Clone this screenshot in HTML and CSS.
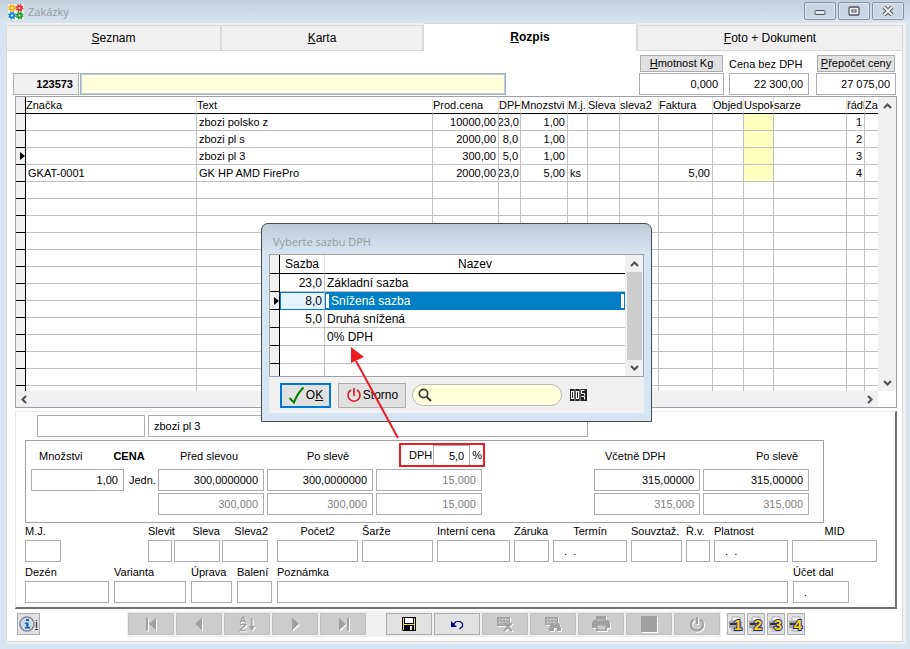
FILE: index.html
```html
<!DOCTYPE html>
<html lang="cs">
<head>
  <meta charset="UTF-8" />
  <meta name="viewport" content="width=device-width, initial-scale=1.0"/>
  <title>Zakázky</title>
  <link rel="stylesheet" href="styles.css">
</head>
<body>

  <header class="titlebar">
    <svg class="app-icon" viewBox="0 0 16 16" width="16" height="16">
      <rect width="16" height="16" fill="#fbf6dc"/>
      <g fill="none" stroke-width="2">
        <circle cx="4" cy="4" r="2" stroke="#f0b323"/>
        <circle cx="11.500" cy="4" r="2" stroke="#e8343c"/>
        <circle cx="4" cy="11.500" r="2" stroke="#1687d9"/>
        <circle cx="11.500" cy="11.500" r="2" stroke="#1f9d3a"/>
      </g>
      <g fill="none" stroke-width="1.500" stroke-dasharray="1.300 1.320">
        <circle cx="4" cy="4" r="3.300" stroke="#f0b323"/>
        <circle cx="11.500" cy="4" r="3.300" stroke="#e8343c"/>
        <circle cx="4" cy="11.500" r="3.300" stroke="#1687d9"/>
        <circle cx="11.500" cy="11.500" r="3.300" stroke="#1f9d3a"/>
      </g>
    </svg>
    <h1>Zakázky</h1>
    <div class="win-buttons">
      <button type="button" aria-label="Minimalizovat">
        <svg width="12" height="10" viewBox="0 0 12 10"><rect x="1" y="4.500" width="10" height="4" rx="1" fill="#e4e4e4" stroke="#50545c"/></svg>
      </button>
      <button type="button" aria-label="Maximalizovat">
        <svg width="12" height="10" viewBox="0 0 12 10"><rect x="1" y="1" width="10" height="8" rx="1" fill="#eee" stroke="#50545c" stroke-width="1.300"/><rect x="4" y="4" width="4" height="2" fill="#fff" stroke="#50545c"/></svg>
      </button>
      <button type="button" aria-label="Zavřít">
        <svg width="12" height="10" viewBox="0 0 12 10"><path d="M2 1 10 9M10 1 2 9" stroke="#50545c" stroke-width="4"/><path d="M2 1 10 9M10 1 2 9" stroke="#fff" stroke-width="1.800"/></svg>
      </button>
    </div>
  </header>

  <main class="window">
    <nav class="tabs">
      <button type="button"><span><u>S</u>eznam</span></button>
      <button type="button"><span><u>K</u>arta</span></button>
      <button type="button" class="active"><span><u>R</u>ozpis</span></button>
      <button type="button"><span><u>F</u>oto + Dokument</span></button>
    </nav>

    <div class="page">
      <!-- Order number and totals -->
      <div class="order-head">
        <input class="order-no" type="text" value="123573" aria-label="Číslo zakázky" readonly>
        <input class="order-name" type="text" aria-label="Název zakázky">
        <div class="totals">
          <div class="total">
            <button type="button" class="small-btn"><u>H</u>motnost Kg</button>
            <input class="num" type="text" value="0,000" aria-label="Hmotnost Kg">
          </div>
          <div class="total total-mid">
            <label for="cenaBez">Cena bez DPH</label>
            <input class="num" type="text" id="cenaBez" value="22 300,00">
          </div>
          <div class="total">
            <button type="button" class="small-btn"><u>P</u>řepočet ceny</button>
            <input class="num" type="text" value="27 075,00" aria-label="Cena s DPH">
          </div>
        </div>
      </div>

      <!-- Items grid -->
      <section class="grid-box">
        <div class="grid-view">
          <table class="grid items">
            <colgroup>
              <col class="w-sel"><col class="w-znacka"><col><col class="w-cena"><col class="w-dph"><col class="w-mnoz"><col class="w-mj"><col class="w-sleva"><col class="w-sleva2"><col class="w-fakt"><col class="w-obj"><col class="w-uspok"><col class="w-sarze"><col class="w-rad"><col class="w-za">
            </colgroup>
            <thead>
              <tr><th></th><th>Značka</th><th>Text</th><th>Prod.cena</th><th>DPH</th><th>Mnozstvi</th><th>M.j.</th><th>Sleva</th><th>sleva2</th><th>Faktura</th><th>Objedn</th><th>Uspok</th><th>sarze</th><th>řádk</th><th>Za</th></tr>
            </thead>
            <tbody id="items">
              <tr><td></td><td></td><td>zbozi polsko z</td><td>10000,00</td><td>23,0</td><td>1,00</td><td></td><td></td><td></td><td></td><td></td><td class="mark"></td><td></td><td>1</td><td></td></tr>
              <tr><td></td><td></td><td>zbozi pl s</td><td>2000,00</td><td>8,0</td><td>1,00</td><td></td><td></td><td></td><td></td><td></td><td class="mark"></td><td></td><td>2</td><td></td></tr>
              <tr class="current"><td></td><td></td><td>zbozi pl 3</td><td>300,00</td><td>5,0</td><td>1,00</td><td></td><td></td><td></td><td></td><td></td><td class="mark"></td><td></td><td>3</td><td></td></tr>
              <tr><td></td><td>GKAT-0001</td><td>GK HP AMD FirePro</td><td>2000,00</td><td>23,0</td><td>5,00</td><td>ks</td><td></td><td></td><td>5,00</td><td></td><td class="mark"></td><td></td><td>4</td><td></td></tr>
            </tbody>
          </table>
          <div class="vscroll">
            <svg width="9" height="6" viewBox="0 0 9 6"><path d="M1 5 4.500 1.500 8 5"/></svg>
            <svg width="9" height="6" viewBox="0 0 9 6"><path d="M1 1 4.500 4.500 8 1"/></svg>
          </div>
        </div>
        <div class="hscroll">
          <svg width="6" height="9" viewBox="0 0 6 9"><path d="M5 1 1.500 4.500 5 8"/></svg>
          <svg width="6" height="9" viewBox="0 0 6 9"><path d="M1 1 4.500 4.500 1 8"/></svg>
        </div>
      </section>

      <!-- Detail of the current item -->
      <section class="detail">
        <div class="detail-name">
          <input class="w108" type="text" aria-label="Značka">
          <input class="w440" type="text" value="zbozi pl 3" aria-label="Text">
        </div>

        <div class="prices">
          <div class="price-head">
            <label for="mnozstvi">Množstvi</label>
            <strong>CENA</strong>
          </div>
          <label class="lab-pred" for="predSlevou">Před slevou</label>
          <label class="lab-po" for="poSleve">Po slevě</label>
          <div class="dph-box">
            <label for="dph">DPH</label>
            <input class="num" type="text" id="dph" value="5,0">
            <span>%</span>
          </div>
          <label class="lab-vcetne" for="vcetneDph">Včetně DPH</label>
          <label class="lab-po2" for="vcetnePo">Po slevě</label>

          <input class="num" type="text" id="mnozstvi" value="1,00">
          <span class="jedn">Jedn.</span>
          <input class="num" type="text" id="predSlevou" value="300,0000000">
          <input class="num" type="text" id="poSleve" value="300,0000000">
          <input class="num dim" type="text" value="15,000" aria-label="DPH za jednotku">
          <input class="num col7" type="text" id="vcetneDph" value="315,00000">
          <input class="num" type="text" id="vcetnePo" value="315,00000">

          <input class="num dim col3" type="text" value="300,000" aria-label="Celkem před slevou">
          <input class="num dim" type="text" value="300,000" aria-label="Celkem po slevě">
          <input class="num dim" type="text" value="15,000" aria-label="DPH celkem">
          <input class="num dim col7" type="text" value="315,000" aria-label="Celkem včetně DPH">
          <input class="num dim" type="text" value="315,000" aria-label="Celkem včetně DPH po slevě">
        </div>

        <div class="fields">
          <div class="field w36"><label for="mj">M.J.</label><input type="text" id="mj"></div>
          <div class="discounts">
            <div class="field w24"><label for="slevit">Slevit</label><input type="text" id="slevit"></div>
            <div class="field w46 right"><label for="sleva">Sleva</label><input type="text" id="sleva"></div>
            <div class="field w46 right"><label for="sleva2">Sleva2</label><input type="text" id="sleva2"></div>
          </div>
          <div class="field w81 center"><label for="pocet2">Počet2</label><input type="text" id="pocet2"></div>
          <div class="field w71"><label for="sarze">Šarže</label><input type="text" id="sarze"></div>
          <div class="field w73"><label for="interni">Interní cena</label><input type="text" id="interni"></div>
          <div class="field w35"><label for="zaruka">Záruka</label><input type="text" id="zaruka"></div>
          <div class="field w74 center date"><label for="termin">Termín</label><input type="text" id="termin" value=".  ."></div>
          <div class="field w51"><label for="souvztaz">Souvztaž.</label><input type="text" id="souvztaz"></div>
          <div class="field w24"><label for="rv">Ř.v.</label><input type="text" id="rv"></div>
          <div class="field w74 date"><label for="platnost">Platnost</label><input type="text" id="platnost" value=".  ."></div>
          <div class="field w85 center"><label for="mid">MID</label><input type="text" id="mid"></div>
        </div>
        <div class="fields wide-gap">
          <div class="field w84"><label for="dezen">Dezén</label><input type="text" id="dezen"></div>
          <div class="field w72"><label for="varianta">Varianta</label><input type="text" id="varianta"></div>
          <div class="field w41"><label for="uprava">Úprava</label><input type="text" id="uprava"></div>
          <div class="field w35"><label for="baleni">Balení</label><input type="text" id="baleni"></div>
          <div class="field w511"><label for="poznamka">Poznámka</label><input type="text" id="poznamka"></div>
          <div class="field w56 date"><label for="ucet">Účet dal</label><input type="text" id="ucet" value="."></div>
        </div>
      </section>

      <footer class="toolbar">
        <button type="button" class="info-btn">
          <svg width="16" height="16" viewBox="0 0 16 16"><circle cx="8" cy="8" r="7" fill="#dfe8f2" stroke="#7c8694" stroke-width="1.500"/><circle cx="8" cy="8" r="5.500" fill="#c9d9ea"/><rect x="7" y="3" width="3" height="2" fill="#1f5fa8"/><path d="M6 6.500h3.500V11H11v1.500H6V11h1.200V8H6z" fill="#1f5fa8"/></svg>
          <u>i</u>
        </button>
        <div class="nav-bar">
          <button type="button" disabled aria-label="První"><svg viewBox="0 0 20 16"><path d="M5 1.500h2v13H5zM15 1.500v13L8 8z"/></svg></button>
          <button type="button" disabled aria-label="Předchozí"><svg viewBox="0 0 20 16"><path d="M13 1.500v13L6 8z"/></svg></button>
          <button type="button" disabled aria-label="Třídit"><svg viewBox="0 0 20 16"><path d="M3 7 6 .800 9 7M4 5h4M3 8.500h6L3 14.500h6" fill="none" stroke="#a0a0a0" stroke-width="1.500"/><path d="M14 2h1.500v8H18l-3.200 5L11.500 10H14z"/></svg></button>
          <button type="button" disabled aria-label="Další"><svg viewBox="0 0 20 16"><path d="M7 1.500v13L14 8z"/></svg></button>
          <button type="button" disabled aria-label="Poslední"><svg viewBox="0 0 20 16"><path d="M6 1.500v13L13 8zM14 1.500h2v13h-2z"/></svg></button>
          <button type="button" class="group" aria-label="Uložit"><svg viewBox="0 0 20 16"><path d="M3 1h14v14H4l-1-1z" fill="#000"/><path d="M4 2h1v6h10V2h1v12H4z" fill="#e8dc3a"/><path d="M6 2h8v5H6z" fill="#fff"/><path d="M5 9h10v5H5z" fill="#000"/><path d="M11 10h2v4h-2z" fill="#e6e6e6"/></svg></button>
          <button type="button" aria-label="Zpět"><svg viewBox="0 0 20 16"><path d="M4 5v6h6z" fill="#00008b"/><path d="M6 9 9 5.500h4l2.500 2v3l-3 2.500" fill="none" stroke="#00008b" stroke-width="1.200"/></svg></button>
          <button type="button" disabled aria-label="Smazat"><svg viewBox="0 0 20 16"><path d="M2 1h13v9H2z"/><path d="M3 4h11M3 7h11M5 2v7M8 2v7M11 2v7" stroke="#d4d4d4" stroke-dasharray="2 1"/><path d="M9 7l8 8M17 7l-8 8" stroke="#a0a0a0" stroke-width="2"/></svg></button>
          <button type="button" disabled aria-label="Hledat"><svg viewBox="0 0 20 16"><path d="M2 1h13v8H2z"/><path d="M3 4h11M3 7h11M5 2v7M8 2v7M11 2v7" stroke="#d4d4d4" stroke-dasharray="2 1"/><path d="M8 7h3v2h2V7h3l2 5v3h-4v-3h-3v3H6v-3z"/></svg></button>
          <button type="button" disabled aria-label="Tisk"><svg viewBox="0 0 20 16"><path d="M5 0h10v4h2l2 2v6h-3v3H5v-3H1V6l2-2h2z"/><path d="M7 10h7v3H7zM6 4h8" fill="#ccc" stroke="#ccc"/></svg></button>
          <button type="button" disabled aria-label="Stop"><svg viewBox="0 0 20 16"><path d="M2 0h16v16H2z"/></svg></button>
          <button type="button" disabled aria-label="Konec"><svg viewBox="0 0 20 16"><path d="M7 3.500a6 6 0 1 0 6 0M10 1v7" fill="none" stroke="#a0a0a0" stroke-width="2.200"/></svg></button>
        </div>
        <div class="prints" id="prints"></div>
      </footer>
    </div>
  </main>

  <!-- VAT rate picker -->
  <div class="dialog" role="dialog" aria-labelledby="dlgTitle">
    <h2 id="dlgTitle">Vyberte sazbu DPH</h2>
    <div class="dialog-body">
      <div class="rates-box">
        <table class="grid rates">
          <colgroup><col class="w-sel"><col class="w-sazba"><col></colgroup>
          <thead>
            <tr><th></th><th>Sazba</th><th>Nazev</th></tr>
          </thead>
          <tbody>
            <tr><td></td><td>23,0</td><td>Základní sazba</td></tr>
            <tr class="current picked"><td></td><td>8,0</td><td><span class="edit">Snížená sazba</span></td></tr>
            <tr><td></td><td>5,0</td><td>Druhá snížená</td></tr>
            <tr><td></td><td></td><td>0% DPH</td></tr>
            <tr><td></td><td></td><td></td></tr>
            <tr><td></td><td></td><td></td></tr>
          </tbody>
        </table>
        <div class="vscroll thumb">
          <svg width="9" height="6" viewBox="0 0 9 6"><path d="M1 5 4.500 1.500 8 5"/></svg>
          <div class="thumb-bar"></div>
          <svg width="9" height="6" viewBox="0 0 9 6"><path d="M1 1 4.500 4.500 8 1"/></svg>
        </div>
      </div>
      <div class="dialog-foot">
        <button type="button" class="ok-btn">
          <svg width="17" height="18" viewBox="0 0 17 18"><path d="M1.500 12 6 16.500Q9 8 15.500 1.500" fill="none" stroke="#008000" stroke-width="2"/></svg>
          <span>O<u>K</u></span>
        </button>
        <button type="button" class="storno-btn">
          <svg width="16" height="16" viewBox="0 0 16 16"><path d="M5 3a6 6 0 1 0 6 0M8 1v8" fill="none" stroke="#dc1420" stroke-width="1.600"/></svg>
          <span>Storno</span>
        </button>
        <div class="search">
          <svg width="14" height="14" viewBox="0 0 14 14"><circle cx="5.500" cy="5.500" r="4.200" fill="none" stroke="#3c3c3c" stroke-width="1.700"/><path d="M8.500 8.500 13 13" stroke="#3c3c3c" stroke-width="2.200"/></svg>
          <input type="text" aria-label="Hledat">
        </div>
        <svg class="counter" width="17" height="12" viewBox="0 0 17 12"><rect width="17" height="12" fill="#222"/><g fill="none" stroke="#fff"><rect x="1.500" y="2.500" width="2" height="7"/><rect x="6.500" y="2.500" width="2" height="7"/><path d="M14.500 1.500h-3v3h3v2M11.500 7.500h3v3"/></g><path d="M5 0v12M10 0v12" stroke="#999"/></svg>
      </div>
    </div>
    <svg class="arrow" width="60" height="100" viewBox="0 0 60 100"><path d="M8 14 50 91" stroke="#ed1c24" stroke-width="2"/><path d="M3 0 16 10 3 16z" fill="#ed1c24"/></svg>
  </div>

  <script>
    // fill the rest of the items grid with blank rows
    const body = document.getElementById("items");
    for (let i = 0; i < 60; i++) {
      const row = body.insertRow();
      for (let c = 0; c < 15; c++) row.insertCell();
    }

    const prints = document.getElementById("prints");
    [1, 2, 3, 4].forEach(n => {
      prints.innerHTML += `
        <button type="button" aria-label="Tisk ${n}">
          <svg width="16" height="18" viewBox="0 0 16 18">
            <path d="M4 2h8v4H4z" fill="#fff" stroke="#aaa"/>
            <path d="M1 6h13v7H1z" fill="#a4a4a4"/>
            <path d="M2 8h6v2H2z" fill="#333"/>
            <path d="M4 13h8v3H4z" fill="#d8ecf8" stroke="#aaa"/>
            <text x="10" y="15">${n}</text>
          </svg>
        </button>`;
    });
  </script>

</body>
</html>
```
FILE: styles.css
```css
* { box-sizing: border-box; }
body {
  margin: 0; height: 100vh; min-height: 600px; overflow: hidden;
  display: flex; flex-direction: column;
  font-family: "Liberation Sans", Arial, sans-serif; font-size: 11px; line-height: 13px;
  color: #000; background: #d7e4f2;
}
input, button {
  font: inherit; color: inherit; margin: 0; padding: 0; border-radius: 0;
}
button { white-space: nowrap; }
input {
  width: 100%; height: 22px; padding: 0 5px; min-width: 0;
  border: 1px solid #abadb3; background: #fff; outline: none;
}
svg { flex: none; display: block; }
.num { text-align: right; }
.dim { color: #808080; }

/* title bar */
.titlebar {
  height: 23px; flex: none; display: flex; align-items: center; gap: 4px; padding: 0 6px 0 8px;
  background: linear-gradient(#c1cfdd, #d7e4f2);
}
.titlebar h1, .dialog h2 {
  margin: 0; font: 11px/16px "Open Sans", "Noto Sans", sans-serif; color: #969a9f;
}
.win-buttons { margin-left: auto; display: flex; gap: 2px; padding-bottom: 2px; }
.win-buttons button {
  width: 32px; height: 18px; display: flex; align-items: center; justify-content: center;
  border: 1px solid #8592a6; border-radius: 2px; background: #c9d6e5;
  box-shadow: inset 0 0 0 1px #dbe6f1;
}

/* window and tabs */
.window {
  flex: 1; min-height: 0; display: flex; flex-direction: column;
  margin: 0 4px 5px 6px; padding-right: 3px; padding-bottom: 2px; background: #f0f0f0;
}
.tabs { height: 28px; flex: none; display: grid; grid-template-columns: 215fr 202fr 214fr 266fr; }
.tabs button {
  margin-top: 2px; font-size: 12px; line-height: 16px;
  border: 1px solid #d9d9d9; background: #f0f0f0;
}
.tabs .active { margin-top: 0; padding-bottom: 2px; font-weight: bold; background: #fff; border-bottom: 0; }
.page {
  flex: 1; min-height: 0; display: flex; flex-direction: column;
  padding: 0 5px 4px 6px; background: #fff; border: solid #d9d9d9; border-width: 0 1px 1px;
}

/* order head */
.order-head { display: flex; align-items: flex-end; height: 45px; flex: none; padding-bottom: 1px; }
.order-head .order-no {
  width: 66px; flex: none; font-weight: bold; text-align: right; background: #f0f0f0;
}
.order-head .order-name { width: 426px; margin-left: 1px; background: #ffffdc; box-shadow: inset 0 0 0 1px #b4d0ec; }
.totals { margin-left: auto; display: flex; gap: 5px; padding-right: 1px; }
.total { width: 80px; display: flex; flex-direction: column; gap: 1px; }
.total:first-child { width: 85px; }
.total-mid { margin-right: 2px; }
.total .small-btn { margin: 0 1px; height: 17px; }
.total label { height: 17px; padding-top: 3px; }
.small-btn { border: 1px solid #adadad; background: #e1e1e1; }

/* grids */
.grid-box {
  flex: 1; min-height: 0; margin-left: 2px; display: flex; flex-direction: column;
  border: 1px solid #a0a0a8;
}
.grid-view { flex: 1; min-height: 0; display: flex; align-items: stretch; overflow: hidden; }
.grid {
  flex: 1; align-self: flex-start; width: 0; table-layout: fixed;
  border-collapse: separate; border-spacing: 0;
}
.grid th, .grid td {
  padding: 0 2px; height: 17px; overflow: hidden; white-space: nowrap;
  border-right: 1px solid #c0c0c0; border-bottom: 1px solid #c0c0c0;
}
.grid th {
  padding: 0; font-weight: normal; text-align: left;
  border-right-color: #e0e0e0; border-bottom-color: #000;
}
.grid th:first-child, .grid td:first-child {
  padding: 0; background: #f0f0f0; border-right-color: #000; border-bottom-color: #000;
}
.grid th:last-child, .grid td:last-child { border-right: 0; }
.current td:first-child::before {
  content: ""; display: block; width: 0; margin-left: 4px;
  border: solid transparent; border-width: 4px 0 4px 5px; border-left-color: #000;
}
.items td:nth-child(4), .items td:nth-child(5), .items td:nth-child(6),
.items td:nth-child(10), .items td:nth-child(14) { text-align: right; }
.items td:nth-child(5) { padding-left: 0; direction: rtl; }
.items .mark { background: #ffffc0; }
.w-sel { width: 10px; }
.w-znacka { width: 171px; }
.w-cena { width: 66px; }
.w-dph { width: 22px; }
.w-mnoz { width: 47px; }
.w-mj { width: 20px; }
.w-sleva { width: 32px; }
.w-sleva2 { width: 39px; }
.w-fakt { width: 54px; }
.w-obj { width: 31px; }
.w-uspok { width: 30px; }
.w-sarze { width: 73px; }
.w-rad { width: 18px; }
.w-za { width: 13px; }
.w-sazba { width: 45px; }

/* scrollbars */
.vscroll {
  width: 18px; flex: none; display: flex; flex-direction: column; align-items: center;
  justify-content: space-between; padding: 6px 0 5px; background: #f0f0f0;
}
.hscroll {
  height: 16px; flex: none; display: flex; align-items: center; justify-content: space-between;
  margin-right: 18px; padding: 0 5px; background: #f0f0f0;
}
.vscroll path, .hscroll path { fill: none; stroke: #505050; stroke-width: 2; }
.vscroll.thumb { gap: 5px; }
.thumb-bar { width: 15px; flex: 1; background: #cdcdcd; }

/* item detail */
.detail {
  flex: none; margin: 3px 0 0 2px; padding: 3px 10px 4px 9px;
  border: solid #e8e8ec; border-width: 1px 2px 2px 1px;
  border-right-color: #707070; border-bottom-color: #707070;
}
.detail-name { display: flex; gap: 3px; padding-left: 12px; }
.prices {
  width: 799px; margin-top: 3px; padding: 2px 0 7px 5px; border: 1px solid #a0a0a0;
  display: grid; grid-template-columns: 93px 28px repeat(6, 106px); gap: 2px 3px; align-items: center;
}
.price-head { grid-column: 1 / 3; display: flex; gap: 31px; padding-left: 8px; }
.price-head, .prices > label { padding-top: 2px; }
.lab-pred { padding-left: 22px; }
.lab-po { padding-left: 40px; }
.lab-vcetne { grid-column: 7; padding-left: 11px; }
.lab-po2 { padding-left: 53px; }
.jedn { padding-left: 2px; }
.col3 { grid-column: 3; }
.col7 { grid-column: 7; }
.dph-box {
  justify-self: end; width: 86px; height: 24px; margin-right: -3px; display: flex; align-items: center;
  padding-left: 8px; border: 2px solid #ed1c24;
}
.dph-box input { width: 37px; height: 20px; margin: 0 2px 0 1px; border-width: 1px 1px 0; }

.fields { display: flex; justify-content: flex-start; gap: 4px; }
.wide-gap { gap: 5px; margin-top: 2px; }
.discounts { display: flex; gap: 2px; margin: 0 5px 0 83px; }
.field { flex: none; display: flex; flex-direction: column; }
.field label { height: 17px; padding-top: 2px; white-space: nowrap; }
.right label { text-align: right; }
.center label { text-align: center; }
.date input { padding-left: 10px; white-space: pre; }
.w24 { width: 24px; }
.w35 { width: 35px; }
.w36 { width: 36px; }
.w41 { width: 41px; }
.w46 { width: 46px; }
.w51 { width: 51px; }
.w56 { width: 56px; }
.w71 { width: 71px; }
.w72 { width: 72px; }
.w73 { width: 73px; }
.w74 { width: 74px; }
.w81 { width: 81px; }
.w84 { width: 84px; }
.w85 { width: 85px; }
.w108 { width: 108px; }
.w440 { width: 440px; }
.w511 { width: 511px; }

/* bottom toolbar */
.toolbar { flex: none; display: flex; align-items: center; height: 26px; margin: 2px 0 0 4px; }
.toolbar button {
  height: 22px; display: flex; align-items: center; justify-content: center;
  border: 1px solid #adadad; background: #e1e1e1;
}
.toolbar .info-btn { width: 23px; }
.nav-bar { display: flex; gap: 2px; margin-left: 87px; padding: 2px 1px; background: #f0f0f0; }
.nav-bar button { width: 46px; }
.nav-bar svg { width: 20px; height: 16px; fill: #a0a0a0; }
.nav-bar button:disabled { background: #ccc; border-color: #bfbfbf; }
.nav-bar button:disabled svg { filter: drop-shadow(1px 1px 0 #fff); }
.nav-bar .group { margin-left: 18px; }
.prints { display: flex; gap: 2px; margin-left: 6px; }
.prints button { width: 18px; }
.prints text {
  font-size: 15px; font-weight: bold; text-anchor: middle;
  fill: #ffd800; stroke: #1c2a9c; stroke-width: 2; paint-order: stroke;
}

/* dialog */
.dialog {
  position: absolute; left: 261px; top: 223px; width: 391px; padding: 10px 7px 8px;
  border: 1px solid #4a4a4a; border-radius: 7px 7px 0 0;
  background: linear-gradient(#bccbda, #d7e4f2 30px);
  font-size: 12px; line-height: 14px;
}
.dialog h2 { padding: 0 0 4px 4px; }
.dialog-body { background: #f0f0f0; }
.rates-box {
  height: 123px; display: flex; overflow: hidden; border: 1px solid #a0a0a8; background: #fff;
}
.rates th, .rates td { height: 18px; }
.rates th { height: 19px; text-align: center; }
.rates td:nth-child(2) { text-align: right; }
.rates .picked td:nth-child(2) {
  background: #e5f3ff; box-shadow: inset 1px 1px 0 #0078d7; border-bottom-color: #0078d7;
}
.rates .picked td:nth-child(3) {
  padding: 0 1px; background: #0080c4; color: #fff; border-bottom-color: #0078d7;
}
.edit { display: block; padding-left: 2px; border: solid #fff; border-width: 0 3px; }
.dialog-foot { display: flex; align-items: center; height: 36px; padding-left: 11px; }
.dialog-foot button {
  height: 25px; display: flex; align-items: center; justify-content: center; gap: 1px;
  border: 1px solid #adadad; background: #e1e1e1;
}
.dialog-foot .ok-btn { width: 51px; border: 2px solid #0078d7; }
.dialog-foot .storno-btn { width: 68px; margin-left: 7px; }
.search {
  width: 150px; height: 22px; margin-left: 6px; padding: 0 10px 0 5px; display: flex; align-items: center; gap: 4px;
  border: 1px solid #b8b8b8; border-radius: 11px; background: #ffffdc;
}
.search input { height: 18px; border: 0; background: transparent; }
.counter { margin-left: 8px; }

/* pointer from the DPH field to the zero rate */
.arrow { position: absolute; left: 86px; top: 123px; }
```
